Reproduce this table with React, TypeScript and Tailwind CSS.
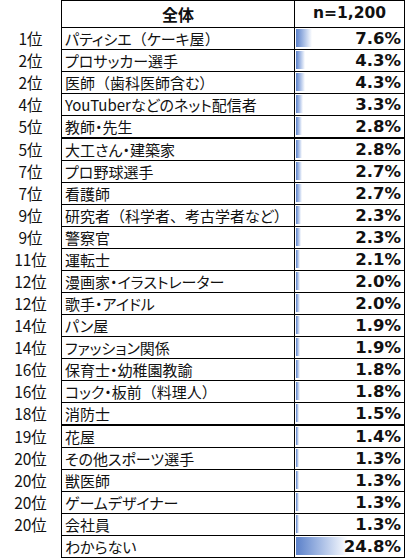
import React from "react";

type Row = { rank: string; name: string; pct: number; thick?: boolean };

const rows: Row[] = [
  { rank: "1位", name: "パティシエ（ケーキ屋）", pct: 7.6 },
  { rank: "2位", name: "プロサッカー選手", pct: 4.3 },
  { rank: "2位", name: "医師（歯科医師含む）", pct: 4.3 },
  { rank: "4位", name: "YouTuberなどのネット配信者", pct: 3.3 },
  { rank: "5位", name: "教師・先生", pct: 2.8, thick: true },
  { rank: "5位", name: "大工さん・建築家", pct: 2.8 },
  { rank: "7位", name: "プロ野球選手", pct: 2.7 },
  { rank: "7位", name: "看護師", pct: 2.7 },
  { rank: "9位", name: "研究者（科学者、考古学者など）", pct: 2.3 },
  { rank: "9位", name: "警察官", pct: 2.3 },
  { rank: "11位", name: "運転士", pct: 2.1 },
  { rank: "12位", name: "漫画家・イラストレーター", pct: 2.0 },
  { rank: "12位", name: "歌手・アイドル", pct: 2.0 },
  { rank: "14位", name: "パン屋", pct: 1.9 },
  { rank: "14位", name: "ファッション関係", pct: 1.9 },
  { rank: "16位", name: "保育士・幼稚園教諭", pct: 1.8 },
  { rank: "16位", name: "コック・板前（料理人）", pct: 1.8 },
  { rank: "18位", name: "消防士", pct: 1.5, thick: true },
  { rank: "19位", name: "花屋", pct: 1.4 },
  { rank: "20位", name: "その他スポーツ選手", pct: 1.3 },
  { rank: "20位", name: "獣医師", pct: 1.3 },
  { rank: "20位", name: "ゲームデザイナー", pct: 1.3 },
  { rank: "20位", name: "会社員", pct: 1.3 },
  { rank: "", name: "わからない", pct: 24.8 },
];

const jp = "font-['Noto_Sans_CJK_JP',sans-serif] [font-feature-settings:'palt']";
const num = "font-['DejaVu_Sans',sans-serif] font-bold";

function Name({ text }: { text: string }) {
  const parts = text.split(/([（）、])/).filter((p) => p !== "");
  return (
    <>
      {parts.map((p, i) =>
        p === "（" || p === "）" || p === "、" ? (
          <span key={i} className="[font-feature-settings:normal]">
            {p}
          </span>
        ) : (
          <span key={i}>{p}</span>
        )
      )}
    </>
  );
}

export default function App() {
  return (
    <div className="w-[406px] h-[559px] bg-white text-[#111]">
      <div className="flex h-[28px]">
        <div className="w-[61px]" />
        <div className={`w-[233px] border-l border-t border-b border-black flex items-center justify-center text-[16px] font-bold ${jp}`}>
          全体
        </div>
        <div className={`w-[111px] border-l border-r border-t border-b border-black flex items-center justify-center text-[15.5px] ${num}`}>
          n=1,200
        </div>
      </div>
      {rows.map((r, i) => (
        <div key={i} className={`flex ${r.thick ? "h-[23px]" : "h-[22px]"}`}>
          <div className={`w-[61px] text-center text-[15.5px] leading-[21px] ${jp}`}>{r.rank}</div>
          <div
            className={`w-[233px] border-l border-black pl-[3px] text-[15px] leading-[21px] whitespace-nowrap overflow-hidden ${jp} ${
              r.thick ? "border-b-2" : "border-b"
            }`}
          >
            <Name text={r.name} />
          </div>
          <div
            className={`relative w-[111px] border-l border-r border-black ${r.thick ? "border-b-2" : "border-b"}`}
          >
            <div
              className="absolute left-[1px] top-[1px] h-[18px] bg-gradient-to-r from-[#5b80c9] to-[#ffffff]"
              style={{ width: `${Math.max(2, Math.round(r.pct * 2.1))}px` }}
            />
            <div className={`relative text-right pr-[3px] text-[16.5px] leading-[21px] ${num}`}>
              {r.pct.toFixed(1)}%
            </div>
          </div>
        </div>
      ))}
    </div>
  );
}
